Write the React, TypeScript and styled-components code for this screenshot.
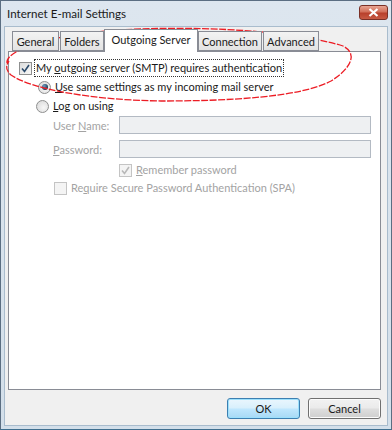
import React from "react";
import styled, { createGlobalStyle } from "styled-components";

const Global = createGlobalStyle`
  html, body { margin: 0; padding: 0; background: #ffffff; }
  body { font-family: Lato, "Noto Sans", sans-serif; font-size: 11px; }
`;

const Window = styled.div`
  position: relative;
  width: 392px;
  height: 430px;
  box-sizing: border-box;
  border: 1px solid #5b6e82;
  border-bottom-color: #3f6f8f;
  background: linear-gradient(#dde6ef, #d3dfea);
  display: flex;
  flex-direction: column;
  overflow: hidden;
`;

const TitleBar = styled.div`
  height: 25px;
  display: flex;
  align-items: center;
  justify-content: space-between;
  padding: 0 3px 0 6px;
  flex: none;
`;

const Title = styled.span`
  font-size: 11.6px;
  color: #1a1a1a;
`;

const CloseBtn = styled.div`
  width: 29px;
  height: 15px;
  box-sizing: border-box;
  border: 1px solid #7a3026;
  border-radius: 3px;
  background: linear-gradient(#e7a493 0%, #d2705a 45%, #b8402c 55%, #c75a43 100%);
  display: flex;
  align-items: center;
  justify-content: center;
  margin-top: -2px;
`;

const Body = styled.div`
  flex: 1;
  margin: 0 3px 3px 3px;
  border: 1px solid #a9bccd;
  background: #f0f0f0;
  display: flex;
  flex-direction: column;
  padding: 2px 6px 0 3px;
`;

const TabStrip = styled.div`
  display: flex;
  align-items: flex-end;
  padding-left: 4px;
  height: 22px;
  position: relative;
  z-index: 1;
`;

const Tab = styled.div<{ $active?: boolean; $w: number }>`
  box-sizing: border-box;
  width: ${(p) => p.$w}px;
  height: ${(p) => (p.$active ? "23px" : "20px")};
  margin-bottom: ${(p) => (p.$active ? "-1px" : "0")};
  margin-left: ${(p) => (p.$active ? "-1px" : "0")};
  margin-right: ${(p) => (p.$active ? "0" : "1px")};
  border: 1px solid #898c95;
  border-bottom: ${(p) => (p.$active ? "none" : "1px solid #898c95")};
  background: ${(p) => (p.$active ? "#ffffff" : "linear-gradient(#f3f3f3, #e3e3e3)")};
  display: flex;
  align-items: center;
  justify-content: center;
  padding-bottom: ${(p) => (p.$active ? "3px" : "0")};
  color: #1a1a1a;
  font-size: 11px;
  white-space: nowrap;
  position: relative;
  z-index: ${(p) => (p.$active ? 2 : 0)};
`;

const Panel = styled.div`
  height: 339px;
  box-sizing: border-box;
  border: 1px solid #898c95;
  background: #ffffff;
  padding: 7px 0 0 10px;
  display: flex;
  flex-direction: column;
`;

const Row = styled.div<{ $indent?: number; $top?: number }>`
  display: flex;
  align-items: center;
  height: 18px;
  margin-left: ${(p) => p.$indent ?? 0}px;
  margin-top: ${(p) => p.$top ?? 0}px;
`;

const Label = styled.span<{ $disabled?: boolean; $focus?: boolean }>`
  font-size: 11px;
  color: ${(p) => (p.$disabled ? "#a3a3a3" : "#1a1a1a")};
  white-space: nowrap;
  padding: 0 1px;
  outline: ${(p) => (p.$focus ? "1px dotted #333" : "none")};
  line-height: 16px;
`;

const U = styled.span`
  text-decoration: underline;
`;

const Box = styled.span<{ $disabled?: boolean }>`
  width: 13px;
  height: 13px;
  box-sizing: border-box;
  border: 1px solid ${(p) => (p.$disabled ? "#c4c4c4" : "#8e8f8f")};
  background: ${(p) =>
    p.$disabled ? "#f4f4f4" : "linear-gradient(135deg, #dcdcdc, #f7f7f7)"};
  display: inline-flex;
  align-items: center;
  justify-content: center;
  margin-right: 3px;
  flex: none;
`;

const Radio = styled.span<{ $checked?: boolean }>`
  width: 13px;
  height: 13px;
  box-sizing: border-box;
  border-radius: 50%;
  border: 1px solid #8e8f8f;
  background: radial-gradient(circle at 60% 60%, #f7f7f7, #d6d6d6);
  display: inline-flex;
  align-items: center;
  justify-content: center;
  margin-right: 3px;
  flex: none;
  &::after {
    content: "";
    display: ${(p) => (p.$checked ? "block" : "none")};
    width: 6px;
    height: 6px;
    border-radius: 50%;
    background: radial-gradient(circle at 35% 35%, #6fa0c8, #1d3a52 70%);
  }
`;

const FieldRow = styled.div<{ $top?: number }>`
  display: flex;
  align-items: center;
  margin-top: ${(p) => p.$top ?? 0}px;
  margin-left: 34px;
`;

const FieldLabel = styled.span`
  width: 66px;
  font-size: 11px;
  color: #a3a3a3;
  white-space: nowrap;
`;

const Input = styled.div`
  width: 252px;
  height: 18px;
  box-sizing: border-box;
  border: 1px solid #b3bac3;
  background: #eef0f2;
`;

const ButtonRow = styled.div`
  display: flex;
  justify-content: flex-end;
  gap: 8px;
  padding: 8px 0 0 0;
`;

const Button = styled.div<{ $default?: boolean }>`
  width: 73px;
  height: 21px;
  box-sizing: border-box;
  border-radius: 3px;
  border: 1px solid ${(p) => (p.$default ? "#3c7fb1" : "#707070")};
  background: ${(p) =>
    p.$default
      ? "linear-gradient(#eaf6fd 0%, #d9f0fc 45%, #bee6fd 55%, #a7d9f5 100%)"
      : "linear-gradient(#f2f2f2 0%, #ebebeb 45%, #dddddd 55%, #cfcfcf 100%)"};
  box-shadow: ${(p) => (p.$default ? "inset 0 0 0 1px #9ce0fc" : "inset 0 0 0 1px #fcfcfc")};
  display: flex;
  align-items: center;
  justify-content: center;
  font-size: 11px;
  color: #1a1a1a;
`;

const Ellipse = styled.svg`
  position: absolute;
  left: 0;
  top: 0;
  pointer-events: none;
`;

const Check = ({ disabled }: { disabled?: boolean }) => (
  <svg width="9" height="9" viewBox="0 0 9 9">
    <path
      d="M1 4.5 L3.5 7.5 L8 1"
      fill="none"
      stroke={disabled ? "#b8b8b8" : "#2b4a6b"}
      strokeWidth="1.6"
    />
  </svg>
);

export default function App() {
  return (
    <>
      <Global />
      <Window>
        <TitleBar>
          <Title>Internet E-mail Settings</Title>
          <CloseBtn>
            <svg width="11" height="9" viewBox="0 0 11 9">
              <path d="M1.5 1 L9.5 8 M9.5 1 L1.5 8" stroke="#ffffff" strokeWidth="2.2" />
            </svg>
          </CloseBtn>
        </TitleBar>
        <Body>
          <TabStrip>
            <Tab $w={47}>General</Tab>
            <Tab $w={44}>Folders</Tab>
            <Tab $active $w={94}>Outgoing Server</Tab>
            <Tab $w={64}>Connection</Tab>
            <Tab $w={56}>Advanced</Tab>
          </TabStrip>
          <Panel>
            <Row>
              <Box>
                <Check />
              </Box>
              <Label $focus>
                My <U>o</U>utgoing server (SMTP) requires authentication
              </Label>
            </Row>
            <Row $indent={19} $top={1}>
              <Radio $checked />
              <Label>
                <U>U</U>se same settings as my incoming mail server
              </Label>
            </Row>
            <Row $indent={17} $top={1}>
              <Radio />
              <Label>
                <U>L</U>og on using
              </Label>
            </Row>
            <FieldRow $top={1}>
              <FieldLabel>
                User <U>N</U>ame:
              </FieldLabel>
              <Input />
            </FieldRow>
            <FieldRow $top={6}>
              <FieldLabel>
                <U>P</U>assword:
              </FieldLabel>
              <Input />
            </FieldRow>
            <Row $indent={100} $top={3}>
              <Box $disabled>
                <Check disabled />
              </Box>
              <Label $disabled>
                <U>R</U>emember password
              </Label>
            </Row>
            <Row $indent={35} $top={0}>
              <Box $disabled />
              <Label $disabled>
                Re<U>q</U>uire Secure Password Authentication (SPA)
              </Label>
            </Row>
          </Panel>
          <ButtonRow>
            <Button $default>OK</Button>
            <Button>Cancel</Button>
          </ButtonRow>
        </Body>
        <Ellipse width="392" height="430" viewBox="0 0 392 430">
          <path
            d="M6 62 C 4 48, 60 30, 140 28 C 220 25, 300 32, 342 45 C 356 52, 352 66, 330 80 C 300 96, 230 100, 160 100 C 90 99, 30 88, 10 74 C 4 69, 5 64, 8 60"
            fill="none"
            stroke="#ec1c24"
            strokeWidth="1.3"
            strokeDasharray="7 1.5"
          />
        </Ellipse>
      </Window>
    </>
  );
}
